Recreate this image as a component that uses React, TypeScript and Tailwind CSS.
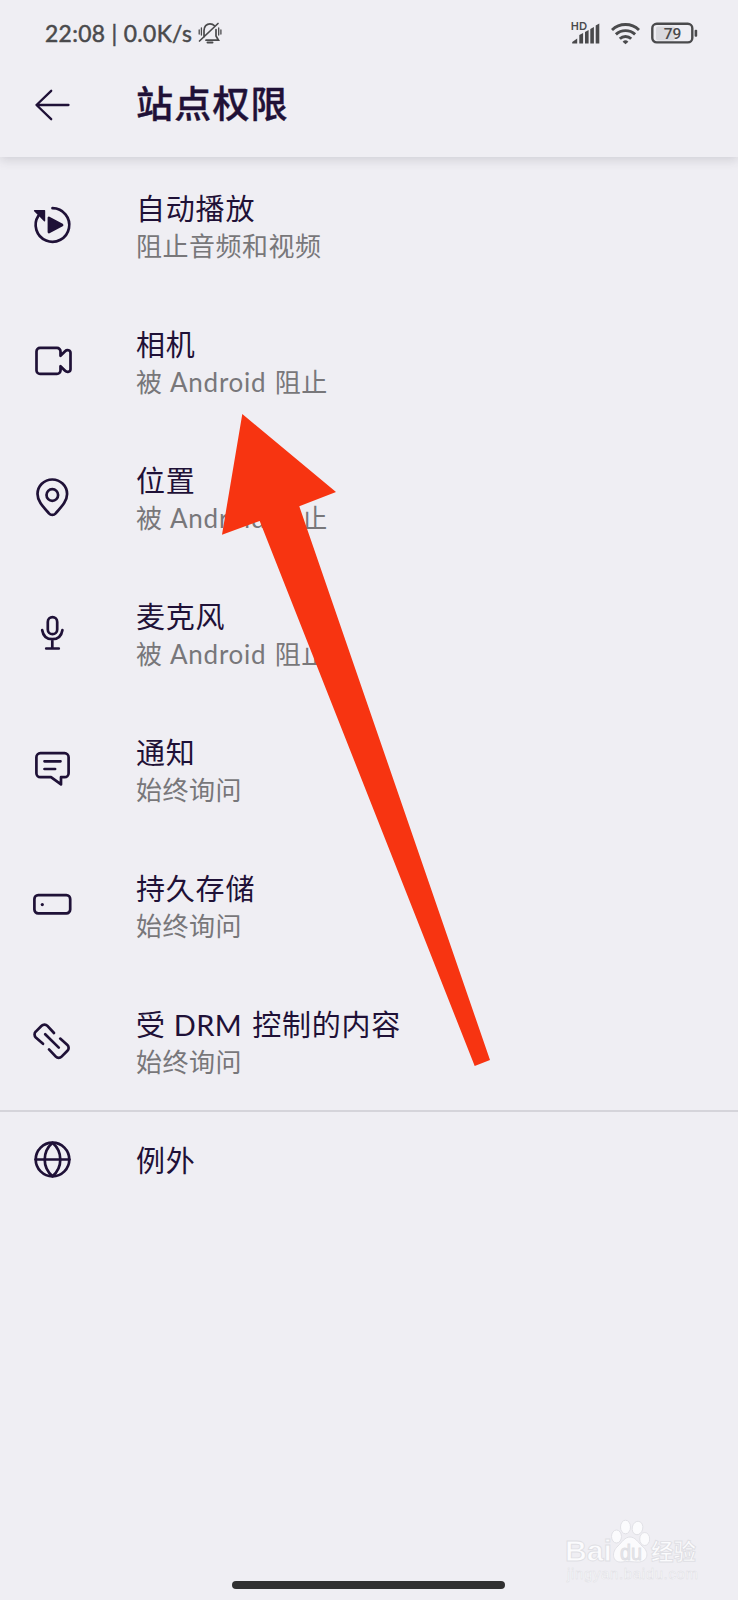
import React from 'react';

type Permission = {
    id: string;
    icon: React.ReactNode;
    title: React.ReactNode;
    status: React.ReactNode;
};

const Latin = ({ children }: { children: React.ReactNode }) => (
    <span className="font-['Lato','Noto_Sans_CJK_SC',sans-serif] leading-none">{children}</span>
);

const RowIcon = ({ children }: { children: React.ReactNode }) => (
    <svg
        viewBox="0 0 48 48"
        className="w-12 h-12 shrink-0"
        fill="none"
        stroke="currentColor"
        strokeWidth="2.7"
        strokeLinecap="round"
        strokeLinejoin="round"
    >
        {children}
    </svg>
);

const blocked = (
    <>
        被<Latin><span className="pl-[7.5px] pr-[8.5px] tracking-[0.75px]">Android</span></Latin>阻止
    </>
);

const permissions: Permission[] = [
    {
        id: 'autoplay',
        icon: (
            <>
                <path d="M24.5 7.2A16.8 16.8 0 1 1 10.4 14.8" />
                <path d="M6.6 9.8h9.9v9.9l-3.4-3.4z" fill="currentColor" strokeWidth="1.4" />
                <path d="M20.9 16.9v14.2l13.2-7.1z" fill="currentColor" strokeWidth="2.6" />
            </>
        ),
        title: '自动播放',
        status: '阻止音频和视频',
    },
    {
        id: 'camera',
        icon: (
            <path d="M12 10.9h17a3.5 3.5 0 0 1 3.5 3.5v4.4l4.6-4.6c2-2 5.4-1 5.4 1.6v16.4c0 2.6-3.4 3.6-5.4 1.6l-4.6-4.6v4.2a3.5 3.5 0 0 1-3.5 3.5H12a3.5 3.5 0 0 1-3.5-3.5V14.4a3.5 3.5 0 0 1 3.5-3.5z" />
        ),
        title: '相机',
        status: blocked,
    },
    {
        id: 'location',
        icon: (
            <>
                <path d="M24.3 6.5c-8.3 0-14.8 6.6-14.8 14.6 0 7 5.6 12.6 11.4 19.2 2 2.2 4.8 2.2 6.8 0 5.8-6.6 11.4-12.2 11.4-19.2 0-8-6.5-14.6-14.8-14.6z" />
                <circle cx="24.3" cy="22" r="5.8" />
            </>
        ),
        title: '位置',
        status: blocked,
    },
    {
        id: 'microphone',
        icon: (
            <>
                <rect x="19.8" y="8.2" width="9.4" height="17" rx="4.7" />
                <path d="M14.2 21.2c1 6 5 9 10.1 9s9.1-3 10.1-9M24.3 30.2v9.3M18.2 39.5h12.6" />
            </>
        ),
        title: '麦克风',
        status: blocked,
    },
    {
        id: 'notification',
        icon: (
            <path d="M12.4 8.2h24.2a4 4 0 0 1 4 4v16a4 4 0 0 1-4 4h-3.6v7.2l-10-7.2H12.4a4 4 0 0 1-4-4v-16a4 4 0 0 1 4-4zM16.5 16.3h16M16.5 24h10.6" />
        ),
        title: '通知',
        status: '始终询问',
    },
    {
        id: 'storage',
        icon: (
            <>
                <rect x="6.4" y="14.2" width="35.8" height="18.2" rx="3.8" />
                <circle cx="14.3" cy="23.6" r="1.6" fill="currentColor" stroke="none" />
            </>
        ),
        title: '持久存储',
        status: '始终询问',
    },
    {
        id: 'drm',
        icon: (
            <>
                <path d="M26 16l-6.6-7.2a4 4 0 0 0-5.8 0l-5.8 5.8a4 4 0 0 0 0 5.8l7.2 6.4" />
                <path d="M17.2 17.2l13.6 13.4" />
                <path d="M21 32.4l6.8 7.2a4 4 0 0 0 5.8 0l5.8-5.8a4 4 0 0 0 0-5.8l-7.2-6.4" />
            </>
        ),
        title: (
            <>
                受<Latin><span className="pl-[8px] pr-[10px] tracking-[0.4px]">DRM</span></Latin>控制的内容
            </>
        ),
        status: '始终询问',
    },
];

const StatusBar = () => (
    <div className="h-[66px] pl-[45px] pr-[40px] flex items-center text-[#4a4a4c]">
        <span className="w-[149px] font-['Lato',sans-serif] text-[22.8px] leading-none tracking-[0.35px] whitespace-nowrap [-webkit-text-stroke:0.5px_#4a4a4c]">
            22:08 | 0.0K/s
        </span>
        <svg viewBox="0 0 24 24" className="w-6 h-6 ml-[4px]" fill="none" stroke="currentColor" strokeWidth="1.7" strokeLinecap="round">
            <path d="M6 16V9.5C6 5.5 8.500 2.800 12 2.800c1.800 0 3.400.7 4.500 1.900M18 8.500V15l2.500 4.200H8M1.500 20L20 2.500" />
            <path d="M9.500 21.400h5" strokeWidth="2" />
            <path d="M1.200 9v4M3.400 7v7M20.700 7v7M22.900 9v4" strokeWidth="1.300" />
        </svg>
        <div className="ml-auto flex items-center gap-[11px]">
            <svg viewBox="0 0 29 24" className="w-[29px] h-6" fill="currentColor">
                <text x="-0.3" y="9.2" fontSize="10.5" fontWeight="700" fontFamily="Lato" letterSpacing="0.3">
                    HD
                </text>
                <path d="M1.200 22.500v-1.500l5-3.500v5zM8.300 22.500V14l3.800-2v10.500zM14 22.500V11l3.600-2v13.500zM19.300 22.500V8l3.600-2v16.500zM24.700 22.500V4.500l3.600-2v20z" />
            </svg>
            <svg viewBox="0 0 29 24" className="w-[29px] h-6" fill="none" stroke="currentColor" strokeWidth="2.9">
                <path d="M1 9a19.500 19.500 0 0 1 27 0" />
                <path d="M4.900 13.400a14 14 0 0 1 19.200 0" />
                <path d="M8.800 17.700a8.300 8.300 0 0 1 11.400 0" />
                <path d="M14.500 23.300l-2.900-2.600a4.200 4.200 0 0 1 5.800 0z" fill="currentColor" stroke="none" />
            </svg>
            <svg viewBox="0 0 47 24" className="w-[47px] h-6">
                <rect x="5" y="5.500" width="19" height="14" rx="2" fill="#d9d9de" />
                <rect x="1.300" y="2.800" width="40" height="18.600" rx="4.500" fill="none" stroke="currentColor" strokeWidth="2.400" />
                <rect x="43.600" y="8.700" width="2.600" height="7" rx="1" fill="currentColor" />
                <text x="21.500" y="17.800" fontSize="15.500" fontWeight="500" fontFamily="Roboto" textAnchor="middle" fill="currentColor">
                    79
                </text>
            </svg>
        </div>
    </div>
);

const Watermark = () => (
    <svg
        viewBox="0 0 140 68"
        className="absolute left-[562px] top-[1516px] w-[140px] h-[68px]"
        fill="#fbfbfd"
        stroke="#dfdfe4"
        strokeWidth="0.9"
        fontFamily="'Liberation Sans', 'Noto Sans CJK SC', sans-serif"
        fontWeight="700"
    >
        <text x="3" y="45" fontSize="29" textLength="47" lengthAdjust="spacingAndGlyphs">Bai</text>
        <ellipse cx="54.500" cy="20.500" rx="5" ry="6.500" />
        <ellipse cx="63.500" cy="11" rx="5" ry="6.800" />
        <ellipse cx="75.500" cy="12" rx="5.300" ry="6.800" transform="rotate(12 75.500 12)" />
        <ellipse cx="82.700" cy="23" rx="5" ry="6.500" />
        <path d="M68 21c5 0 8 5 12 9 8 6 6 16-4 16-4 0-12-1-16 0-10 1-11-10-4-16 4-4 7-9 12-9z" />
        <text x="58" y="43.500" fontSize="22" fontWeight="400" fill="#e6e6ea" textLength="22" lengthAdjust="spacingAndGlyphs">du</text>
        <text x="89" y="44" fontSize="22.500">经验</text>
        <text x="5" y="62.500" fontSize="15" fontWeight="400" strokeWidth="0.500" textLength="131">jingyan.baidu.com</text>
    </svg>
);

const App = () => (
    <main className="relative w-[738px] h-[1600px] overflow-hidden flex flex-col bg-[#efeef3] text-[#1f1137] font-['Noto_Sans_CJK_SC',sans-serif]">
        <header className="h-[157px] shrink-0 shadow-[0_3px_10px_rgba(60,60,70,0.17)]">
            <StatusBar />
            <div className="h-[78px] pl-7 flex items-center">
                <svg viewBox="0 0 48 48" className="w-12 h-12" fill="none" stroke="currentColor" strokeWidth="2.300" strokeLinecap="round" strokeLinejoin="round">
                    <path d="M40.500 24H8.500M23.200 9.800L8.500 24l14.700 14.200" />
                </svg>
                <h1 className="ml-[60px] pb-[7px] text-[37px] leading-[48px] font-medium tracking-[1.2px] [-webkit-text-stroke:0.4px_#1f1137]">站点权限</h1>
            </div>
        </header>

        <ul className="shrink-0">
            {permissions.map((item) => (
                <li key={item.id} className="h-[136px] pl-7 flex items-center">
                    <RowIcon>{item.icon}</RowIcon>
                    <div className="ml-[60px] whitespace-nowrap">
                        <div className="h-[39px] text-[29px] leading-[41px] tracking-[0.8px]">{item.title}</div>
                        <div className="h-[38px] text-[26px] leading-[38px] tracking-[0.5px] text-[#78777a]">{item.status}</div>
                    </div>
                </li>
            ))}
        </ul>

        <div className="h-[98px] shrink-0 pl-7 border-t-2 border-[#d5d4da] flex items-center mt-px">
            <RowIcon>
                <circle cx="24.500" cy="23.500" r="16.800" />
                <path d="M24.500 6.700c-10.400 9-10.400 24.600 0 33.600c10.400-9 10.400-24.600 0-33.600z" />
                <path d="M7.700 23.500h33.600" />
            </RowIcon>
            <div className="ml-[60px] pb-[2px] text-[29px] leading-[39px] tracking-[0.8px]">例外</div>
        </div>

        <div className="mt-auto mb-[11px] mr-[2px] self-center w-[273px] h-[8px] rounded-full bg-[#303031]" />

        <svg viewBox="0 0 738 1600" className="absolute left-0 top-0 w-[738px] h-[1600px] pointer-events-none">
            <path d="M242.300 414L336 492l-36.700 14.300L490 1060l-15.300 6L259.700 521 222 534.700z" fill="#f73411" />
        </svg>
        <Watermark />
    </main>
);

export default App;
